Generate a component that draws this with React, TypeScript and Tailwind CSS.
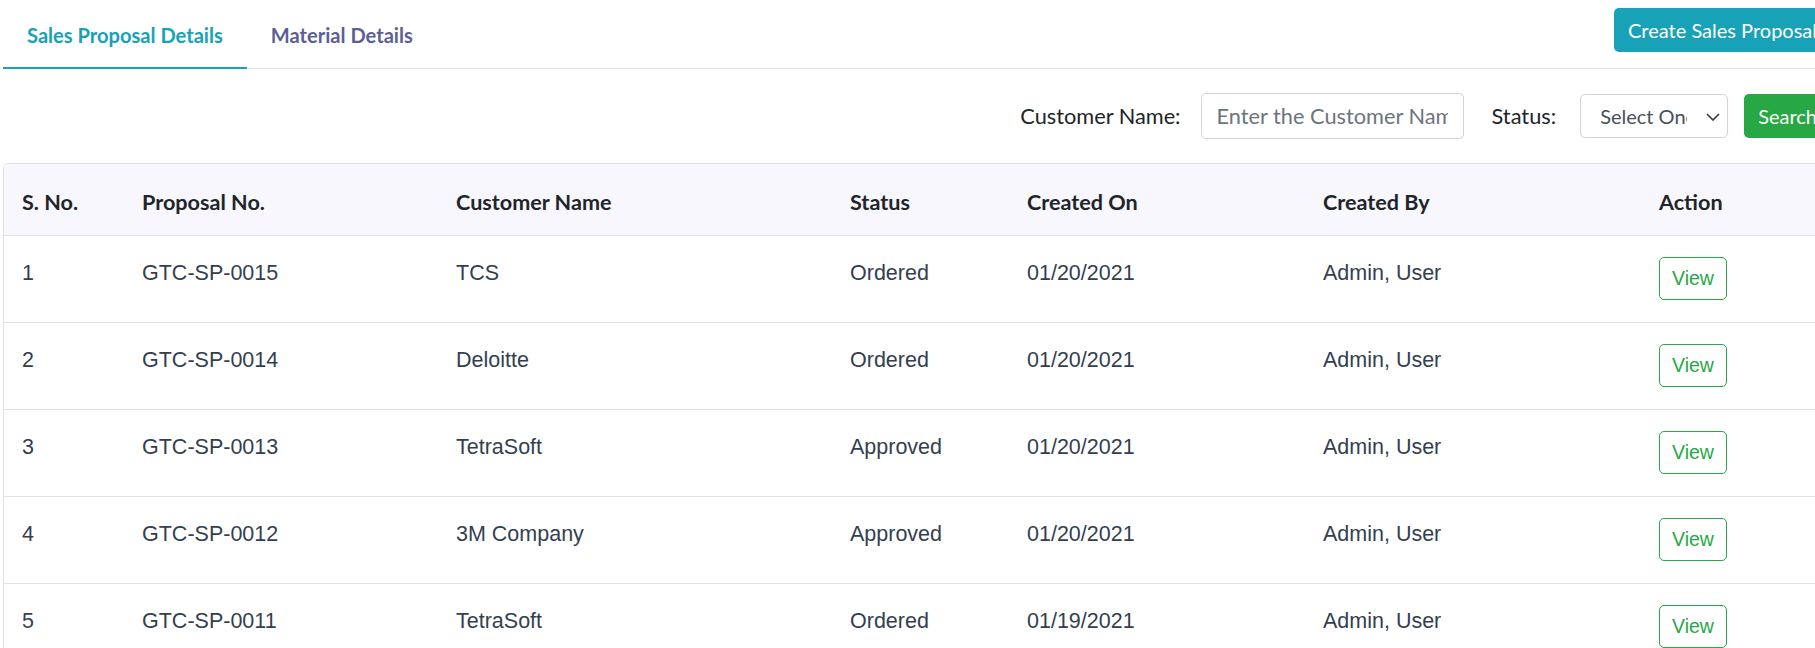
import React, { useState } from 'react';

type Proposal = {
  id: number;
  number: string;
  customer: string;
  status: string;
  createdOn: string;
  createdBy: string;
};

const PROPOSALS: Proposal[] = [
  { id: 1, number: 'GTC-SP-0015', customer: 'TCS', status: 'Ordered', createdOn: '01/20/2021', createdBy: 'Admin, User' },
  { id: 2, number: 'GTC-SP-0014', customer: 'Deloitte', status: 'Ordered', createdOn: '01/20/2021', createdBy: 'Admin, User' },
  { id: 3, number: 'GTC-SP-0013', customer: 'TetraSoft', status: 'Approved', createdOn: '01/20/2021', createdBy: 'Admin, User' },
  { id: 4, number: 'GTC-SP-0012', customer: '3M Company', status: 'Approved', createdOn: '01/20/2021', createdBy: 'Admin, User' },
  { id: 5, number: 'GTC-SP-0011', customer: 'TetraSoft', status: 'Ordered', createdOn: '01/19/2021', createdBy: 'Admin, User' },
];

const COLUMNS = ['S. No.', 'Proposal No.', 'Customer Name', 'Status', 'Created On', 'Created By', 'Action'];
const COL_WIDTHS = ['w-[120px]', 'w-[314px]', 'w-[394px]', 'w-[177px]', 'w-[296px]', 'w-[336px]', 'w-[189px]'];

function Tab(props: { label: string; active: boolean; onClick: () => void }) {
  const { label, active, onClick } = props;
  return (
    <button
      type="button"
      onClick={onClick}
      className={`-mb-px h-[69px] border-b-2 px-6 pt-[20px] pb-[17px] text-[20.1px] leading-[30px] font-bold ${
        active ? 'border-[#17a2b8] text-[#17a2b8]' : 'border-transparent text-[#5b5f97]'
      }`}
    >
      {label}
    </button>
  );
}

function StatusSelect() {
  return (
    <div className="relative flex h-[44px] w-[148px] items-center rounded-[5px] border border-[#ced4da] bg-white pl-[19px] text-[20px] text-[#495057]">
      <span className="block w-[87px] overflow-hidden whitespace-nowrap">Select One</span>
      <svg
        className="absolute right-[7px] top-[18px]"
        width="14"
        height="8"
        viewBox="0 0 14 8"
        fill="none"
        stroke="#343a40"
        strokeWidth="1.6"
        aria-hidden
      >
        <polyline points="1,1 7,7 13,1" />
      </svg>
    </div>
  );
}

export default function App() {
  const [tab, setTab] = useState('sales');
  const [customer, setCustomer] = useState('');

  return (
    <div className="w-[1815px] overflow-hidden bg-white font-['Lato',sans-serif] text-[#212529]">
      <div className="ml-[3px] w-[1828px]">
        {/* tabs + create button */}
        <div className="flex items-start justify-between border-b border-[#dee2e6]">
          <div className="flex">
            <Tab label="Sales Proposal Details" active={tab === 'sales'} onClick={() => setTab('sales')} />
            <Tab label="Material Details" active={tab === 'material'} onClick={() => setTab('material')} />
          </div>
          <button
            type="button"
            className="mt-[8px] h-[44px] rounded-[5px] bg-[#17a2b8] px-[14px] text-[20px] leading-[30px] text-white"
          >
            Create Sales Proposal
          </button>
        </div>

        {/* filters */}
        <div className="mt-[24px] flex h-[46px] items-center justify-end text-[21.75px]">
          <label htmlFor="customer-name" className="mr-[20px]">
            Customer Name:
          </label>
          <input
            id="customer-name"
            value={customer}
            onChange={(e) => setCustomer(e.target.value)}
            placeholder="Enter the Customer Name"
            className="h-[46px] w-[263px] rounded-[5px] border border-[#ced4da] px-[15px] text-[21.75px] text-[#495057] outline-none placeholder:text-[#6c757d]"
          />
          <span className="ml-[28px] mr-[24px]">Status:</span>
          <StatusSelect />
          <button
            type="button"
            className="ml-[16px] h-[44px] rounded-[5px] bg-[#28a745] px-[14px] text-[20px] text-white"
          >
            Search
          </button>
        </div>

        {/* proposals table */}
        <div className="mt-[24px] overflow-hidden rounded-[6px] border border-[#dee2e6]">
          <table className="w-full table-fixed border-collapse">
            <colgroup>
              {COL_WIDTHS.map((w, i) => (
                <col key={i} className={w} />
              ))}
            </colgroup>
            <thead>
              <tr className="border-b border-[#dee2e6] bg-[#f7f7fd]">
                {COLUMNS.map((c) => (
                  <th
                    key={c}
                    className="pl-[18px] pt-[23px] pb-[18px] text-left text-[21.6px] leading-[30px] font-bold text-[#212529]"
                  >
                    {c}
                  </th>
                ))}
              </tr>
            </thead>
            <tbody className="font-['Liberation_Sans',Arial,sans-serif] text-[21.5px] leading-[32px] text-[#333f50]">
              {PROPOSALS.map((p) => (
                <tr key={p.id} className="border-b border-[#dee2e6]">
                  <td className="pl-[18px] pt-[21px] pb-[22px] align-top">{p.id}</td>
                  <td className="pl-[18px] pt-[21px] pb-[22px] align-top">{p.number}</td>
                  <td className="pl-[18px] pt-[21px] pb-[22px] align-top">{p.customer}</td>
                  <td className="pl-[18px] pt-[21px] pb-[22px] align-top">{p.status}</td>
                  <td className="pl-[18px] pt-[21px] pb-[22px] align-top">{p.createdOn}</td>
                  <td className="pl-[18px] pt-[21px] pb-[22px] align-top">{p.createdBy}</td>
                  <td className="pl-[18px] pt-[21px] pb-[22px] align-top">
                    <button
                      type="button"
                      className="block h-[43px] w-[68px] rounded-[5px] border border-[#28a745] text-[19.5px] leading-none text-[#28a745]"
                    >
                      View
                    </button>
                  </td>
                </tr>
              ))}
            </tbody>
          </table>
        </div>
      </div>
    </div>
  );
}
